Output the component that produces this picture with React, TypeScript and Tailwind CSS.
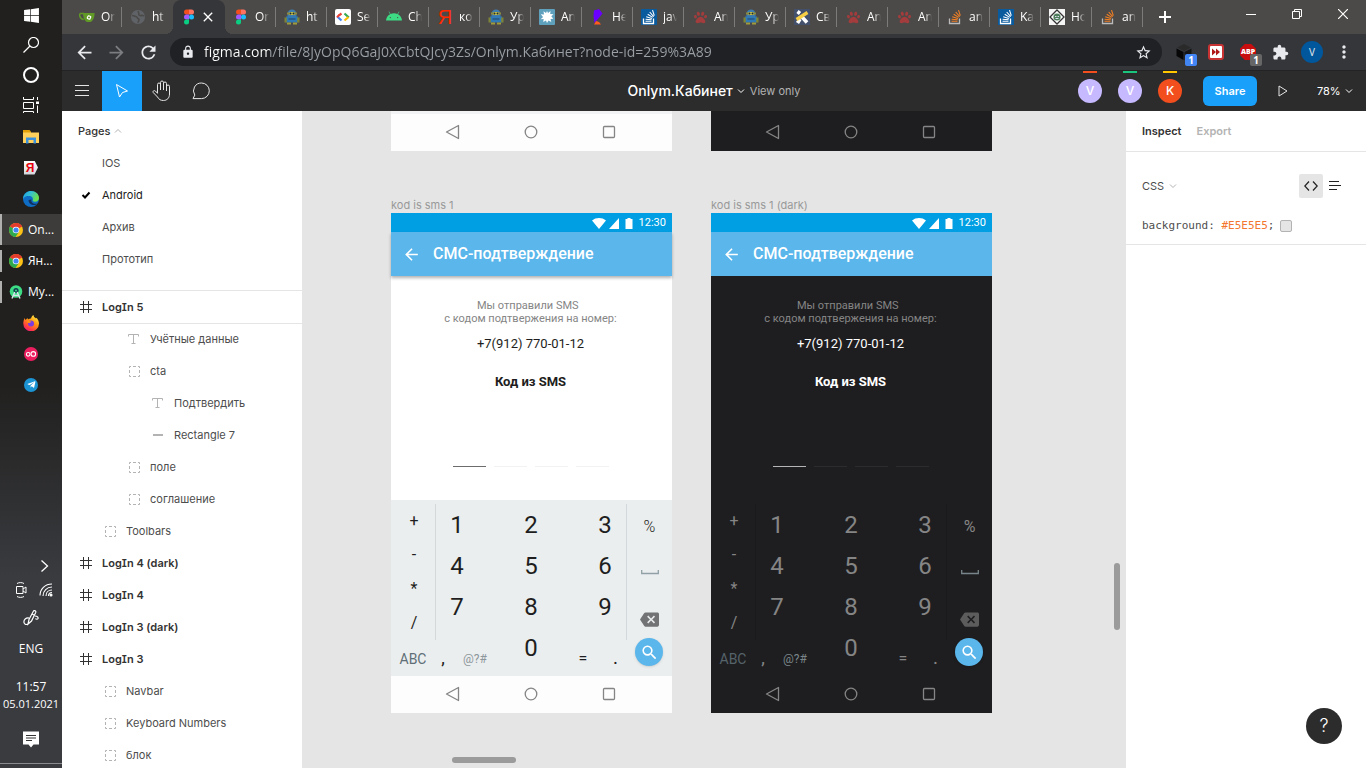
import { useState } from "react";
import type { ReactNode } from "react";
import {
  MdArrowBack,
  MdArrowForward,
  MdBackspace,
  MdClose,
  MdExtension,
  MdLock,
  MdMoreVert,
  MdRefresh,
  MdSearch,
  MdStarBorder,
} from "react-icons/md";
import {
  FaAndroid,
  FaPaw,
  FaTelegramPlane,
  FaWindows,
} from "react-icons/fa";

/* ---------- favicons ---------- */

const FigmaIcon = () => (
  <svg width="16" height="16" viewBox="0 0 16 16">
    <path d="M5.5 0.5H8v5H5.5a2.5 2.5 0 0 1 0-5z" fill="#f24e1e" />
    <path d="M8 0.5h2.5a2.5 2.5 0 0 1 0 5H8z" fill="#ff7262" />
    <path d="M5.500 5.500H8v5H5.500a2.500 2.500 0 0 1 0-5z" fill="#a259ff" />
    <circle cx="10.500" cy="8" r="2.500" fill="#1abcfe" />
    <path d="M5.500 10.500H8V13a2.500 2.500 0 1 1-2.500-2.500z" fill="#0acf83" />
  </svg>
);

const GiteaIcon = () => (
  <svg width="16" height="16" viewBox="0 0 16 16">
    <path
      d="M5 4.500H1.800c-1 0-1.300 1-1 2.500.500 2.200 2 3.300 4 3.500"
      fill="none"
      stroke="#609926"
      strokeWidth="1.500"
    />
    <path d="M4 4h11.500c.3 4-1.500 8-4 9H8c-2.500-1-4-5-4-9z" fill="#609926" />
    <rect
      x="8"
      y="6.500"
      width="4"
      height="4"
      rx="1"
      fill="#fff"
      transform="rotate(25 10 8.500)"
    />
    <circle cx="10" cy="8.500" r="1" fill="#609926" />
  </svg>
);

const GlobeIcon = () => (
  <svg width="16" height="16" viewBox="0 0 16 16">
    <circle cx="8" cy="8" r="7" fill="#5f6368" />
    <path
      d="M2 6.500c2 0 2.500 1 4 1s1 2 2.500 2.300c1 .3.500 2-.8 4M8.500 2c-1 1.200.8 1.800.3 3s1.500 2 2.500 1.500 1.500.5 3 .3"
      fill="none"
      stroke="#4c4a48"
      strokeWidth="1.600"
    />
  </svg>
);

const RobotIcon = () => (
  <svg width="16" height="16" viewBox="0 0 16 16">
    <path d="M3.500 5a4.500 4.500 0 0 1 9 0v3h-9z" fill="#3f7cae" />
    <path d="M3 3.500h10v2H3z" fill="#8f8a3a" />
    <rect x="5" y="3" width="6" height="3" rx="1.500" fill="#c9c04a" />
    <circle cx="6.500" cy="4.500" r="1" fill="#1d2a33" />
    <circle cx="9.500" cy="4.500" r="1" fill="#1d2a33" />
    <path d="M2 7.500h12v6H2z" fill="#2f79b5" />
    <path d="M4.500 9h7v2h-7z" fill="#285f8e" />
    <path d="M.5 8.500h2.300v5H.5zM13.200 8.500h2.300v5h-2.300z" fill="#7d8436" />
    <path d="M3 13.500h4v2H3zM9 13.500h4v2H9z" fill="#a09a3c" />
  </svg>
);

const DevIcon = () => (
  <svg width="16" height="16" viewBox="0 0 16 16">
    <rect width="16" height="16" rx="2" fill="#fff" />
    <path d="M6.500 4.500L4 6.300" stroke="#ea4335" strokeWidth="2.200" />
    <path d="M2.200 7.500L6.500 11.500" stroke="#4285f4" strokeWidth="2.200" />
    <path d="M9.500 4.500L13.800 8.500" stroke="#34a853" strokeWidth="2.200" />
    <path d="M13.500 8L9.500 11.500" stroke="#fbbc04" strokeWidth="2.200" />
    <path d="M4.500 5.800L2 8.200" stroke="#ea4335" strokeWidth="2.200" />
  </svg>
);

const SplatIcon = () => (
  <svg width="16" height="16" viewBox="0 0 16 16">
    <rect width="16" height="16" rx="1" fill="#5fa0bd" />
    <path
      d="M8 2l1 2 2.500-2-.3 3 3.300.2-2.200 2 2 2.500-2.800.2.8 3-2.800-1.400L8 14l-1-2.500L4.200 13l.5-3-3 .3L4 8 1.800 5.300l3.200.2-.5-3.300L7 4z"
      fill="#fff"
    />
  </svg>
);

const HerokuIcon = () => (
  <svg width="16" height="16" viewBox="0 0 16 16">
    <path d="M4 1.500L9 0l3.500 4.500-2 2.500L4.500 14 3.500 7z" fill="#6a00ff" />
    <path d="M4 15.500L6 12l3 1 2 2.500z" fill="#ff5a1f" />
  </svg>
);

const OverflowIcon = ({ blue }: { blue?: boolean }) => (
  <svg width="16" height="16" viewBox="0 0 16 16">
    {blue && <rect width="16" height="16" fill="#0a5a9e" />}
    <path
      d="M2.500 9.500v5h10v-5"
      fill="none"
      stroke={blue ? "#fff" : "#bcbbbb"}
      strokeWidth="1.300"
    />
    <path
      d="M4.500 12.300h6M4.600 10.200l6 .6M5.200 7.800l5.700 1.700M6.700 5.200l5 3.200M8.700 3l4 4.600M11.500 1.200l1.800 5.500"
      stroke={blue ? "#fff" : "#f48024"}
      strokeWidth="1.100"
    />
  </svg>
);

const KotlinIcon = () => (
  <svg width="16" height="16" viewBox="0 0 16 16">
    <rect width="16" height="16" fill="#43506b" />
    <path d="M3.500 2.500l2.500 2M8 8l5 5.500M3.500 14l2.500-4" stroke="#fff" strokeWidth="3.600" />
    <path d="M2.500 10.500L13.500 3.500" stroke="#f7cf46" strokeWidth="3.400" />
  </svg>
);

const DiamondIcon = () => (
  <svg width="16" height="16" viewBox="0 0 16 16">
    <rect width="16" height="16" fill="#f4f4f4" />
    <path d="M8 1l7 7-7 7-7-7z" fill="#fff" stroke="#333" strokeWidth="1.300" />
    <circle cx="8" cy="8" r="3.600" fill="#4e7d5b" />
    <path d="M6 7.500h1.500M8.500 7.500H10M6.500 9.500h3" stroke="#dde" />
  </svg>
);

const YaIcon = () => (
  <span className="w-4 text-center font-['Liberation_Sans'] text-xl/4 text-[#ff2a00]">
    Я
  </span>
);

const Paw = () => <FaPaw size={13} color="#a33c3c" />;

type TabInfo = { title: string; icon: ReactNode; active?: boolean; line?: boolean };

const tabs: TabInfo[] = [
  { title: "On", icon: <GiteaIcon />, line: true },
  { title: "ht", icon: <GlobeIcon /> },
  { title: "Onlym.Кабинет", icon: <FigmaIcon />, active: true },
  { title: "On", icon: <FigmaIcon />, line: true },
  { title: "ht", icon: <RobotIcon />, line: true },
  { title: "Se", icon: <DevIcon />, line: true },
  { title: "Ch", icon: <FaAndroid size={16} color="#3ddc84" />, line: true },
  { title: "ко", icon: <YaIcon />, line: true },
  { title: "Ур", icon: <RobotIcon />, line: true },
  { title: "An", icon: <SplatIcon />, line: true },
  { title: "He", icon: <HerokuIcon />, line: true },
  { title: "jav", icon: <OverflowIcon blue />, line: true },
  { title: "An", icon: <Paw />, line: true },
  { title: "Ур", icon: <RobotIcon />, line: true },
  { title: "Св", icon: <KotlinIcon />, line: true },
  { title: "An", icon: <Paw />, line: true },
  { title: "An", icon: <Paw />, line: true },
  { title: "an", icon: <OverflowIcon />, line: true },
  { title: "Ka", icon: <OverflowIcon blue />, line: true },
  { title: "Ho", icon: <DiamondIcon />, line: true },
  { title: "an", icon: <OverflowIcon />, line: true },
];

/* ---------- windows taskbar ---------- */

const ChromeIcon = () => (
  <svg width="14" height="14" viewBox="0 0 14 14">
    <circle cx="7" cy="7" r="7" fill="#fbc116" />
    <path d="M7 7L.94 3.500A7 7 0 0 1 13.060 3.500z" fill="#e33b2e" />
    <path d="M7 0a7 7 0 0 1 6.060 3.500H7z" fill="#e33b2e" />
    <path d="M.94 3.500A7 7 0 0 0 6.500 14L10 8.700 7 7z" fill="#2da94f" />
    <circle cx="7" cy="7" r="3.300" fill="#fff" />
    <circle cx="7" cy="7" r="2.600" fill="#4285f4" />
  </svg>
);

const StudioIcon = () => (
  <svg width="14" height="14" viewBox="0 0 14 14">
    <circle cx="7" cy="6.500" r="6.300" fill="#3ddc84" />
    <circle cx="7" cy="5.500" r="2.600" fill="#123b50" />
    <circle cx="7" cy="5.500" r="1" fill="#3ddc84" />
    <path d="M5.800 7L3 13.500M8.200 7L11 13.500M4 10.500h6" stroke="#d7e4ea" strokeWidth="1.400" />
  </svg>
);

const SearchThin = () => (
  <svg width="16" height="16" viewBox="0 0 16 16" fill="none" stroke="#fff">
    <circle cx="10.500" cy="5.500" r="5" strokeWidth="1.200" />
    <path d="M7 9L.5 15.500" strokeWidth="1.300" />
  </svg>
);

const TaskViewIcon = () => (
  <svg width="16" height="16" viewBox="0 0 16 16" fill="none" stroke="#fff">
    <path d="M.5 0v2.500h10V0M.5 5.500h10v6H.5zM.5 16v-1.500h10V16M14.500 0v3M14.500 8.500V16" />
    <path d="M13 4.500h3v2.500h-3z" fill="#fff" stroke="none" />
  </svg>
);

const FolderIcon = () => (
  <svg width="16" height="14" viewBox="0 0 16 14">
    <path d="M0 0h6.500l1.500 1.500V4H0z" fill="#e3a008" />
    <path d="M0 2.500h16V13H0z" fill="#ffd15c" />
    <path d="M3 13.500V7.500h10v6h-2.500V10h-5v3.500z" fill="#3c91dc" />
  </svg>
);

const YandexIcon = () => (
  <span className="flex h-3.5 w-3.5 items-center justify-center bg-linear-to-b from-white to-gray-300 pr-0.5 font-['Liberation_Sans'] text-xs font-bold text-red-600 [clip-path:polygon(0_0,75%_0,100%_50%,75%_100%,0_100%)]">
    Я
  </span>
);

const EdgeIcon = () => (
  <svg width="16" height="16" viewBox="0 0 16 16">
    <defs>
      <linearGradient id="edgeTop" x1="0" y1="0" x2="1" y2="0.4">
        <stop offset="0" stopColor="#1b9de2" />
        <stop offset="0.5" stopColor="#35c1d0" />
        <stop offset="1" stopColor="#6be04a" />
      </linearGradient>
    </defs>
    <circle cx="8" cy="8" r="8" fill="#0f6cc4" />
    <path
      d="M.2 6.500C1 2.500 4.500 0 8 0c4.500 0 8 3.200 8 7 0 2.200-1.800 3.700-4 3.700-1.800 0-2.600-.6-2.200-1.400C10.500 7 9 5 6 5 3.500 5 1.200 5.500.2 8z"
      fill="url(#edgeTop)"
    />
    <path d="M5.500 9c0 3 2.500 5 5.500 5 1.500 0 2.800-.5 3.800-1.600-1.400.6-3.300.6-4.800-.2C8.500 11.300 8 10 8.500 8.500z" fill="#11325f" />
  </svg>
);

const FirefoxIcon = () => (
  <svg width="16" height="16" viewBox="0 0 16 16">
    <defs>
      <linearGradient id="fox" x1="0.8" y1="0" x2="0.2" y2="1">
        <stop offset="0" stopColor="#fff04a" />
        <stop offset="0.4" stopColor="#ff980e" />
        <stop offset="0.8" stopColor="#ff3647" />
        <stop offset="1" stopColor="#e31587" />
      </linearGradient>
    </defs>
    <path
      d="M1.500 3l1 2 2-2 .5 1.500C6 3.500 7.500 3.500 8 3.500 8.500 1.500 9.500.5 10.500 0c0 2 1.500 2.500 2.500 3.500l.5-.8C15 4 16 6.500 16 8.500A7.800 7.800 0 0 1 .3 8.500C.3 6 1 4.500 1.500 3z"
      fill="url(#fox)"
    />
    <circle cx="8" cy="8.500" r="3" fill="#7a3be0" />
    <path d="M4 6.500c2-1 3 0 4.500.3L6.500 8c-1 0-2-.3-2.500-1.500z" fill="#ff980e" />
  </svg>
);

const PinkIcon = () => (
  <svg width="14" height="14" viewBox="0 0 14 14">
    <circle cx="7" cy="7" r="7" fill="#ed1e5f" />
    <g fill="none" stroke="#fff" strokeWidth="1.100">
      <circle cx="4.200" cy="7.300" r="1.800" />
      <circle cx="9.300" cy="6.900" r="2.300" />
    </g>
  </svg>
);

const TelegramIcon = () => (
  <span className="flex h-3.5 w-3.5 items-center justify-center rounded-full bg-[#1c93d2]">
    <FaTelegramPlane size={9} color="#fff" />
  </span>
);

const launchers = [
  { name: "Проводник", icon: <FolderIcon /> },
  { name: "Yandex", icon: <YandexIcon /> },
  { name: "Edge", icon: <EdgeIcon /> },
];

const runningApps = [
  { label: "On...", icon: <ChromeIcon />, active: true },
  { label: "Ян...", icon: <ChromeIcon /> },
  { label: "My...", icon: <StudioIcon /> },
];

const pinnedApps = [
  { name: "Firefox", icon: <FirefoxIcon /> },
  { name: "oO", icon: <PinkIcon /> },
  { name: "Telegram", icon: <TelegramIcon /> },
];

const Taskbar = () => (
  <aside className="flex w-[62px] shrink-0 flex-col bg-linear-to-b from-[#21201f] from-50% to-[#393b3f] to-75% font-['Open_Sans',sans-serif] text-xs text-white">
    <button aria-label="Start" className="flex h-[30px] items-center justify-center">
      <FaWindows size={17} />
    </button>
    <button aria-label="Search" className="flex h-[30px] items-center justify-center">
      <SearchThin />
    </button>
    <button aria-label="Cortana" className="flex h-[30px] items-center justify-center">
      <span className="h-4 w-4 rounded-full border-2 border-white" />
    </button>
    <button aria-label="Task view" className="mb-px flex h-[30px] items-center justify-center">
      <TaskViewIcon />
    </button>
    {launchers.map((app) => (
      <button key={app.name} aria-label={app.name} className="flex h-[31px] items-center justify-center">
        {app.icon}
      </button>
    ))}
    {runningApps.map((app) => (
      <button
        key={app.label}
        className={`flex h-[31px] items-center ${app.active ? "bg-[#3d3c3b]" : ""}`}
      >
        <span className={`w-0.5 bg-[#b0b0af] ${app.active ? "h-full" : "h-[22px]"}`} />
        <span className="ml-[7px] mr-[5px]">{app.icon}</span>
        {app.label}
      </button>
    ))}
    {pinnedApps.map((app) => (
      <button key={app.name} aria-label={app.name} className="flex h-[31px] items-center justify-center">
        {app.icon}
      </button>
    ))}

    <div className="mt-auto flex flex-col">
      <button aria-label="Show hidden icons" className="flex h-6 items-center justify-end pr-3">
        <svg width="10" height="14" viewBox="0 0 10 14" fill="none" stroke="#fff" strokeWidth="1.300">
          <path d="M1.500 1.500L7.500 7l-6 5.500" />
        </svg>
      </button>
      <div className="flex h-6 items-center justify-between pl-[15px] pr-[9px]">
        <svg width="13" height="16" viewBox="0 0 13 16" fill="none" stroke="#fff">
          <path d="M2 1.500c2-1.200 5-1.200 7 0M2 14.500c2 1.200 5 1.200 7 0M1.500 4.500h6.500v7H1.500zM8 7l3-2v6l-3-2" />
        </svg>
        <svg width="14" height="14" viewBox="0 0 14 14" fill="none" stroke="#fff" strokeWidth="1.100">
          <path d="M1 12.500C1 6 6 1 13 1M4 13c0-5 4-9 9-9M7 13c0-3.500 2.500-6 6-6" />
          <path d="M9.500 13c0-2 1.500-3.500 3.500-3.500" />
          <circle cx="12" cy="12" r="1" fill="#fff" />
        </svg>
      </div>
      <div className="flex h-8 items-center justify-center">
        <svg width="16" height="16" viewBox="0 0 16 16" fill="none" stroke="#fff" strokeWidth="1.200">
          <path d="M5 14l1-4.500L10.500 1c1-1 2.800 0 2.200 1.500L8.500 11zM6 8c-3-.5-5.500 1.500-5 4.500.3 2 2.500 2.500 4 1.500M12 6c2 .2 3.500 1 3 2.500-.4 1-2 1-2.500 0M9 4l2 1" />
        </svg>
      </div>
      <span className="flex h-[30px] items-center justify-center">ENG</span>
      <div className="flex flex-col items-center pb-[3px] pt-[14px] leading-[17px]">
        <span>11:57</span>
        <span className="whitespace-nowrap text-[11px] leading-[17px]">05.01.2021</span>
      </div>
      <button aria-label="Notifications" className="flex h-12 items-center justify-center">
        <svg width="16" height="17" viewBox="0 0 16 17">
          <path d="M0 .5h16v13h-5.500L8 16.500l-2.500-3H0z" fill="#fff" />
          <path d="M3 4.500h10M3 7h10M3 9.500h6" stroke="#333" />
        </svg>
      </button>
      <div className="h-[5px] border-t border-[#8a8b8c]" />
    </div>
  </aside>
);

/* ---------- browser chrome ---------- */

const BrowserTab = ({ tab }: { tab: TabInfo }) =>
  tab.active ? (
    <div className="relative flex h-full w-[52px] items-center rounded-t-lg bg-[#35363a] pl-2 before:absolute before:bottom-0 before:-left-2 before:size-2 before:bg-[radial-gradient(circle_at_0_0,transparent_8px,#35363a_8px)] after:absolute after:-right-2 after:bottom-0 after:size-2 after:bg-[radial-gradient(circle_at_100%_0,transparent_8px,#35363a_8px)]">
      {tab.icon}
      <button aria-label="Close tab" className="ml-[3px] text-white">
        <MdClose size={16} />
      </button>
    </div>
  ) : (
    <button className="flex h-full w-[51px] items-center">
      <span
        className={`flex h-5 w-full items-center pl-2 ${tab.line ? "border-r border-[#7d7b79]" : ""}`}
      >
        <span className="flex w-4 justify-center">{tab.icon}</span>
        <span className="ml-1.5 w-[14px] overflow-hidden whitespace-nowrap text-left text-xs text-white [mask-image:linear-gradient(90deg,#000_50%,transparent)]">
          {tab.title}
        </span>
      </span>
    </button>
  );

const TabStrip = () => (
  <div className="flex h-[34px] items-center bg-[#4c4a48] pl-[9px] text-white">
    {tabs.map((tab, i) => (
      <BrowserTab key={i} tab={tab} />
    ))}
    <button aria-label="New tab" className="ml-4">
      <svg width="12" height="12" viewBox="0 0 12 12" stroke="#fff" strokeWidth="2">
        <path d="M6 0v12M0 6h12" />
      </svg>
    </button>
    <div className="ml-auto flex h-7 self-start">
      <button aria-label="Minimize" className="flex w-[46px] items-center justify-center">
        <svg width="10" height="10" viewBox="0 0 10 10" stroke="#fff">
          <path d="M0 5.500h10" />
        </svg>
      </button>
      <button aria-label="Restore" className="flex w-[46px] items-center justify-center">
        <svg width="10" height="10" viewBox="0 0 10 10" fill="none" stroke="#fff">
          <path d="M.5 2.500h7v7h-7zM2.500 2.500v-2h7v7h-2" />
        </svg>
      </button>
      <button aria-label="Close" className="flex w-[46px] items-center justify-center">
        <svg width="10" height="10" viewBox="0 0 10 10" stroke="#fff" strokeWidth="1.200">
          <path d="M0 0l10 10M10 0L0 10" />
        </svg>
      </button>
    </div>
  </div>
);

const AddressBar = () => {
  const [url, setUrl] = useState(
    "figma.com/file/8JyOpQ6GaJ0XCbtQJcy3Zs/Onlym.Кабинет?node-id=259%3A89"
  );

  return (
    <div className="flex h-9 items-center bg-[#35363a] pl-1.5 pr-1.5 text-[#e8eaed]">
      <button aria-label="Back" className="flex w-8 justify-center">
        <MdArrowBack size={21} />
      </button>
      <button aria-label="Forward" className="flex w-8 justify-center text-[#7c7d80]">
        <MdArrowForward size={21} />
      </button>
      <button aria-label="Reload" className="flex w-8 justify-center">
        <MdRefresh size={21} />
      </button>
      <div className="ml-1.5 flex h-7 flex-1 items-center rounded-full bg-[#202124] pl-[11px] pr-2.5">
        <MdLock size={14} />
        <input
          aria-label="Address"
          value={url}
          onChange={(e) => setUrl(e.target.value)}
          className="ml-[9px] min-w-0 flex-1 bg-[linear-gradient(90deg,#fff_66px,#9aa0a6_66px)] bg-clip-text text-sm text-transparent outline-none"
        />
        <button aria-label="Bookmark">
          <MdStarBorder size={17} />
        </button>
      </div>
      <button aria-label="Cube extension" className="relative ml-1.5 flex w-8 justify-center">
        <svg width="16" height="16" viewBox="0 0 16 16">
          <path d="M8 0l7 3.500L8 7 1 3.500z" fill="#2a2a2a" />
          <path d="M.5 4.500L7.500 8v8L.5 12z" fill="#070707" />
          <path d="M15.500 4.500L8.500 8v8l7-4z" fill="#151515" />
        </svg>
        <span className="absolute left-[17px] top-[10px] w-3 rounded-xs bg-[#4285f4] text-center text-[10px]/3 font-bold text-white">
          1
        </span>
      </button>
      <button aria-label="Skip extension" className="flex w-8 justify-center">
        <svg width="16" height="16" viewBox="0 0 16 16">
          <rect x="1" y="1" width="14" height="14" rx="2" fill="#fff" stroke="#c83232" strokeWidth="2" />
          <path d="M4 4.500L8 8l-4 3.500zM8 4.500L12 8l-4 3.500z" fill="#b01818" />
        </svg>
      </button>
      <button aria-label="Adblock" className="relative flex w-8 justify-center">
        <span className="flex size-4 items-center justify-center bg-[#c70d0d] text-[7px] font-extrabold text-white [clip-path:polygon(30%_0,70%_0,100%_30%,100%_70%,70%_100%,30%_100%,0_70%,0_30%)]">
          ABP
        </span>
        <span className="absolute left-[18px] top-[10px] w-3 rounded-xs bg-[#666] text-center text-[10px]/3 font-bold text-white">
          1
        </span>
      </button>
      <button aria-label="Extensions" className="flex w-8 justify-center">
        <MdExtension size={17} />
      </button>
      <button className="flex w-8 justify-center">
        <span className="size-[22px] rounded-full bg-[#01579b] text-center text-[10px]/[22px]">V</span>
      </button>
      <button aria-label="Menu" className="flex w-8 justify-center">
        <MdMoreVert size={20} />
      </button>
    </div>
  );
};

/* ---------- figma toolbar ---------- */

const Chevron = ({ up }: { up?: boolean }) => (
  <svg width="8" height="8" viewBox="0 0 8 8" fill="none" stroke="currentColor">
    <path d={up ? "M1 5.500l3-3 3 3" : "M1 2.500l3 3 3-3"} />
  </svg>
);

const people = [
  { letter: "V", bar: "bg-[#f24e1e]", circle: "bg-[#c7b9ff]" },
  { letter: "V", bar: "bg-[#1bc47d]", circle: "bg-[#c7b9ff]" },
  { letter: "K", bar: "bg-[#ffc700]", circle: "bg-[#f24e1e]" },
];

const Toolbar = () => (
  <header className="grid h-[41px] grid-cols-[1fr_auto_1fr] border-t border-[#232323] bg-[#2c2c2c] text-[11px] text-white">
    <div className="flex">
      <button aria-label="Menu" className="flex w-10 items-center justify-center">
        <svg width="14" height="12" viewBox="0 0 14 12" stroke="#e5e5e5">
          <path d="M0 .5h14M0 5.500h14M0 10.500h14" />
        </svg>
      </button>
      <button aria-label="Move" className="flex w-10 items-center justify-center bg-[#18a0fb]">
        <svg width="16" height="16" viewBox="0 0 16 16" fill="none" stroke="#fff">
          <path d="M2.500 1.500l11 6.500-5 1.500-3 4.500z" />
        </svg>
      </button>
      <button aria-label="Hand" className="flex w-10 items-center justify-center">
        <svg width="20" height="22" viewBox="0 0 20 22" fill="none" stroke="#e5e5e5" strokeLinejoin="round">
          <path d="M5.500 13V4.500a1.500 1.500 0 0 1 3 0V10 2.500a1.500 1.500 0 0 1 3 0V10 3.500a1.500 1.500 0 0 1 3 0V11 6.500a1.500 1.500 0 0 1 3 0V14c0 4-2.500 6.500-6 6.500-3 0-4.500-1-6-3.500L1.200 12.500c-.8-1.500 1-2.500 2.200-1.500l2.100 2.300z" />
        </svg>
      </button>
      <button aria-label="Comment" className="flex w-10 items-center justify-center">
        <svg width="20" height="18" viewBox="0 0 20 18" fill="none" stroke="#e5e5e5">
          <path d="M9.500 1a7.800 7.800 0 1 1 0 15.600H1l1.800-3.500A7.800 7.800 0 0 1 9.500 1z" />
        </svg>
      </button>
    </div>

    <div className="flex items-center">
      <button className="flex items-center gap-1 text-sm font-medium">
        Onlym.Кабинет
        <Chevron />
      </button>
      <span className="ml-[5px] text-[#b3b3b3]">View only</span>
    </div>

    <div className="flex items-center justify-end">
      {people.map((p, i) => (
        <button key={i} className="flex h-full w-10 flex-col items-center">
          <span className={`mb-1.5 h-0.5 w-[14px] ${p.bar}`} />
          <span className={`size-6 rounded-full text-xs/6 font-medium ${p.circle}`}>{p.letter}</span>
        </button>
      ))}
      <button className="ml-[13px] mr-1.5 h-[30px] w-[54px] rounded-md bg-[#18a0fb] font-semibold">
        Share
      </button>
      <button aria-label="Present" className="flex w-10 justify-center">
        <svg width="10" height="12" viewBox="0 0 10 12" fill="none" stroke="#e5e5e5">
          <path d="M1 1v10l8-5z" />
        </svg>
      </button>
      <button className="flex w-[63px] items-center gap-1 pl-[14px]">
        78%
        <Chevron />
      </button>
    </div>
  </header>
);

/* ---------- layers panel ---------- */

const pages = ["IOS", "Android", "Архив", "Прототип"];

type Layer = { name: string; kind: "frame" | "group" | "text" | "rect"; pad: string };

const layers: Layer[] = [
  { name: "LogIn 5", kind: "frame", pad: "pl-4" },
  { name: "Учётные данные", kind: "text", pad: "pl-16" },
  { name: "cta", kind: "group", pad: "pl-16" },
  { name: "Подтвердить", kind: "text", pad: "pl-[88px]" },
  { name: "Rectangle 7", kind: "rect", pad: "pl-[88px]" },
  { name: "поле", kind: "group", pad: "pl-16" },
  { name: "соглашение", kind: "group", pad: "pl-16" },
  { name: "Toolbars", kind: "group", pad: "pl-10" },
  { name: "LogIn 4 (dark)", kind: "frame", pad: "pl-4" },
  { name: "LogIn 4", kind: "frame", pad: "pl-4" },
  { name: "LogIn 3 (dark)", kind: "frame", pad: "pl-4" },
  { name: "LogIn 3", kind: "frame", pad: "pl-4" },
  { name: "Navbar", kind: "group", pad: "pl-10" },
  { name: "Keyboard Numbers", kind: "group", pad: "pl-10" },
  { name: "блок", kind: "group", pad: "pl-10" },
];

const LayerIcon = ({ kind }: { kind: Layer["kind"] }) => (
  <svg width="16" height="16" viewBox="0 0 16 16" fill="none" stroke="#b3b3b3">
    {kind === "frame" && <path d="M5.500 2v12M10.500 2v12M2 5.500h12M2 10.500h12" stroke="#333" />}
    {kind === "text" && <path d="M2.500 5.500v-2h10v2M7.500 3.500v9M5.500 12.500h4" />}
    {kind === "rect" && <path d="M3 8h10" strokeWidth="2" />}
    {kind === "group" && (
      <path d="M5 3.500H3.500V5M7 3.500h3M12 3.500h1.500V5M13.500 7v3M13.500 12v1.500H12M10 13.500H7M5 13.500H3.500V12M3.500 10V7" />
    )}
  </svg>
);

const LayersPanel = () => {
  const [page, setPage] = useState("Android");

  return (
    <nav className="w-60 shrink-0 overflow-hidden bg-white text-[11px] text-[#4d4d4d]">
      <div className="border-b border-[#e5e5e5] pb-[15px]">
        <button className="flex h-9 items-center gap-1 pl-4 pt-1 font-medium text-[#333]">
          Pages
          <span className="text-[#b3b3b3]">
            <Chevron up />
          </span>
        </button>
        {pages.map((name) => (
          <button
            key={name}
            onClick={() => setPage(name)}
            className="flex h-8 w-full items-center gap-2 pl-4"
          >
            <span className="w-4">
              {page === name && (
                <svg width="16" height="16" viewBox="0 0 16 16" fill="none" stroke="#000" strokeWidth="2">
                  <path d="M4.500 8l2.500 2.500 4.500-5" />
                </svg>
              )}
            </span>
            <span className={page === name ? "text-[#222]" : ""}>{name}</span>
          </button>
        ))}
      </div>
      {layers.map((layer, i) => (
        <button
          key={layer.name}
          className={`flex w-full items-center gap-2 ${layer.pad} ${
            i === 0 ? "-mb-px h-[33px] border-b border-[#e5e5e5]" : "h-8"
          } ${layer.kind === "frame" ? "font-semibold text-[#333] [font-feature-settings:'cv08']" : ""}`}
        >
          <LayerIcon kind={layer.kind} />
          {layer.name}
        </button>
      ))}
    </nav>
  );
};

/* ---------- canvas ---------- */

const NavButtons = ({ dark }: { dark?: boolean }) => (
  <div
    className={`flex h-[37px] items-center justify-center gap-16 pb-px pr-0.5 ${
      dark ? "bg-[#1e1e20]" : "bg-[#fdfdfd]"
    }`}
  >
    <svg width="15" height="16" viewBox="0 0 15 16" fill="none" stroke="#858585" strokeWidth="1.300" strokeLinejoin="round">
      <path d="M13.500 1.500v13L1.500 8z" />
    </svg>
    <svg width="14" height="14" viewBox="0 0 14 14" fill="none" stroke="#858585" strokeWidth="1.300">
      <circle cx="7" cy="7" r="5.800" />
    </svg>
    <svg width="14" height="14" viewBox="0 0 14 14" fill="none" stroke="#858585" strokeWidth="1.300">
      <rect x="1.500" y="1.500" width="11" height="11" rx="1" />
    </svg>
  </div>
);

const digitRows = [
  ["1", "2", "3"],
  ["4", "5", "6"],
  ["7", "8", "9"],
];

const Keyboard = ({ dark }: { dark?: boolean }) => {
  const line = dark ? "border-[#1a1a1c]" : "border-[#d3d8da]";
  const muted = dark ? "text-[#56636a]" : "text-[#5f6f77]";

  return (
    <div
      className={`h-44 pt-1 ${dark ? "bg-[#1e1e20] text-[#858585]" : "bg-[#ebeeef] text-[#1e1e20]"}`}
    >
      <div className="flex h-[136px]">
        <div className={`flex w-[45px] flex-col border-r pl-0.5 text-base ${line}`}>
          {["+", "-", "*", "/"].map((key) => (
            <button key={key} className="h-[34px]">
              {key}
            </button>
          ))}
        </div>
        <div className="flex flex-1 flex-col">
          {digitRows.map((row) => (
            <div key={row[0]} className="flex h-[41px] justify-between pl-px pr-px">
              {row.map((digit) => (
                <button key={digit} className="w-10 text-2xl">
                  {digit}
                </button>
              ))}
            </div>
          ))}
        </div>
        <div className={`flex w-[46px] flex-col items-center border-l ${line}`}>
          <button className={`h-[46px] shrink-0 text-base ${dark ? "" : "font-light"}`}>%</button>
          <button aria-label="Space" className="flex h-[46px] shrink-0 items-center">
            <svg width="18" height="6" viewBox="0 0 18 6" fill="none" stroke={dark ? "#78868c" : "#90a0a6"} strokeWidth="1.300">
              <path d="M.7 0v3.500h16.600V0" />
            </svg>
          </button>
          <button
            aria-label="Backspace"
            className={`flex h-[46px] shrink-0 items-center ${dark ? "text-[#5c5c5d]" : "text-[#717375]"}`}
          >
            <MdBackspace size={19} />
          </button>
        </div>
      </div>
      <div className="flex h-9 items-center pt-0.5">
        <button className={`w-11 text-sm ${muted}`}>ABC</button>
        <button className="w-4 text-base font-medium">,</button>
        <button className={`w-12 text-xs ${dark ? "text-[#7a858a]" : "text-[#8d979b]"}`}>@?#</button>
        <button className="-mt-0.5 w-16 self-start text-2xl/[17px]">0</button>
        <button className="w-10 text-base">=</button>
        <button className="w-[25px] text-base font-medium">.</button>
        <button
          aria-label="Find"
          className="ml-[7px] -mt-1 flex size-7 items-center justify-center self-start rounded-full bg-[#5ab6eb] text-white shadow-sm"
        >
          <MdSearch size={19} />
        </button>
      </div>
    </div>
  );
};

const Phone = ({ name, dark }: { name: string; dark?: boolean }) => (
  <div className="w-[281px] font-['Roboto',sans-serif]">
    <div className={`h-10 border-t-[3px] ${dark ? "border-[#1e1e20]" : "border-[#f1f3f4]"}`}>
      <NavButtons dark={dark} />
    </div>
    <p className="mt-[46px] h-4 font-['Inter',sans-serif] text-[11px]/4 text-[#999]">{name}</p>

    <div className={dark ? "bg-[#1e1e20]" : "bg-white"}>
      <div className="flex h-[19px] items-center justify-end bg-[#009fe3] pr-1.5 pt-px text-[11px] text-white">
        <svg width="14" height="11" viewBox="0 0 14 11" fill="#fff">
          <path d="M7 11L0 2.500C4-.8 10-.8 14 2.500z" />
        </svg>
        <svg className="ml-[3px]" width="10" height="11" viewBox="0 0 10 11" fill="#fff">
          <path d="M10 0v11H0z" />
        </svg>
        <svg className="ml-1.5 mr-1.5" width="8" height="11" viewBox="0 0 8 11" fill="#fff">
          <path d="M2.500 0h3v1h2v10h-7V1h2z" />
        </svg>
        12:30
      </div>
      <div
        className={`flex h-11 items-center gap-3 bg-[#5ab6eb] pl-[11px] text-base font-medium text-white ${
          dark ? "" : "shadow-[0_2px_3px_rgba(0,0,0,0.3)]"
        }`}
      >
        <button aria-label="Назад">
          <MdArrowBack size={19} />
        </button>
        СМС-подтверждение
      </div>
      <div className="flex h-[224px] flex-col items-center pr-0.5 pt-[23px] text-center">
        <p className="text-[11px]/[13px] text-[#858585]">
          Мы отправили SMS&nbsp;&nbsp;
          <br />с кодом подтвержения на номер:
        </p>
        <p className={`mt-[11px] text-[13px]/4 ${dark ? "text-white" : "text-[#1e1e20]"}`}>
          +7(912) 770-01-12
        </p>
        <p className={`mt-[22px] text-[13px]/4 font-bold ${dark ? "text-white" : "text-[#1e1e20]"}`}>
          Код из SMS
        </p>
        <div className="mt-[61px] flex gap-2">
          {[1, 2, 3, 4].map((n) => (
            <input
              key={n}
              aria-label={`Цифра ${n}`}
              maxLength={1}
              className={`h-4 w-[33px] border-b text-center outline-none ${
                n === 1
                  ? dark
                    ? "border-[#b5b5b5]"
                    : "border-[#6c6c6c]"
                  : dark
                    ? "border-[#2c2c2e]"
                    : "border-[#f2f2f2]"
              }`}
            />
          ))}
        </div>
      </div>
      <Keyboard dark={dark} />
      <NavButtons dark={dark} />
    </div>
  </div>
);

const Canvas = () => (
  <main className="relative flex-1 overflow-hidden bg-[#e5e5e5]">
    <div className="flex gap-[39px] pl-[89px]">
      <Phone name="kod is sms 1" />
      <Phone name="kod is sms 1 (dark)" dark />
    </div>
    <div className="absolute bottom-[138px] right-1.5 h-[67px] w-1.5 rounded-full bg-[#9b9b9b]" />
    <div className="absolute bottom-[5px] left-[150px] h-1.5 w-16 rounded-full bg-[#9b9b9b]" />
  </main>
);

/* ---------- inspect panel ---------- */

const InspectPanel = () => (
  <aside className="relative w-60 shrink-0 bg-white text-[11px] text-[#4d4d4d]">
    <div className="flex h-[41px] items-center gap-[15px] border-b border-[#e5e5e5] pl-4 font-semibold">
      <button className="text-[#333]">Inspect</button>
      <button className="text-[#b3b3b3]">Export</button>
    </div>
    <div className="h-[93px] border-b border-[#e5e5e5] pl-4 pr-[25px] pt-[22px]">
      <div className="flex h-6 items-center">
        <select aria-label="Code language" className="appearance-none outline-none">
          <option>CSS</option>
        </select>
        <span className="ml-1 text-[#b3b3b3]">
          <Chevron />
        </span>
        <button
          aria-label="Code"
          className="ml-auto flex size-6 items-center justify-center rounded-xs bg-[#e5e5e5]"
        >
          <svg width="14" height="10" viewBox="0 0 14 10" fill="none" stroke="#222" strokeWidth="1.200">
            <path d="M5 .5L.8 5 5 9.500M9 .5L13.200 5 9 9.500" />
          </svg>
        </button>
        <button aria-label="Table" className="ml-1.5">
          <svg width="12" height="10" viewBox="0 0 12 10" stroke="#222">
            <path d="M0 .5h10M0 4.500h12M0 8.500h8" />
          </svg>
        </button>
      </div>
      <p className="mt-5 flex h-4 items-center font-['DejaVu_Sans_Mono',monospace]">
        <span>background:&nbsp;</span>
        <span className="text-[#f2762e]">#E5E5E5</span>
        <span>;</span>
        <span className="ml-1.5 size-3 rounded-xs border border-[#b3b3b3] bg-[#e5e5e5]" />
      </p>
    </div>
    <button className="absolute bottom-6 right-6 size-9 rounded-full bg-[#2c2c2c] text-lg font-light text-white">
      ?
    </button>
  </aside>
);

const App = () => {
  return (
    <div className="flex h-screen overflow-hidden">
      <Taskbar />
      <div className="flex min-w-0 flex-1 flex-col">
        <div className="font-['Open_Sans',sans-serif]">
          <TabStrip />
          <AddressBar />
        </div>
        <div className="flex min-h-0 flex-1 flex-col font-['Inter',sans-serif]">
          <Toolbar />
          <div className="flex min-h-0 flex-1">
            <LayersPanel />
            <Canvas />
            <InspectPanel />
          </div>
        </div>
      </div>
    </div>
  );
};

export default App;
